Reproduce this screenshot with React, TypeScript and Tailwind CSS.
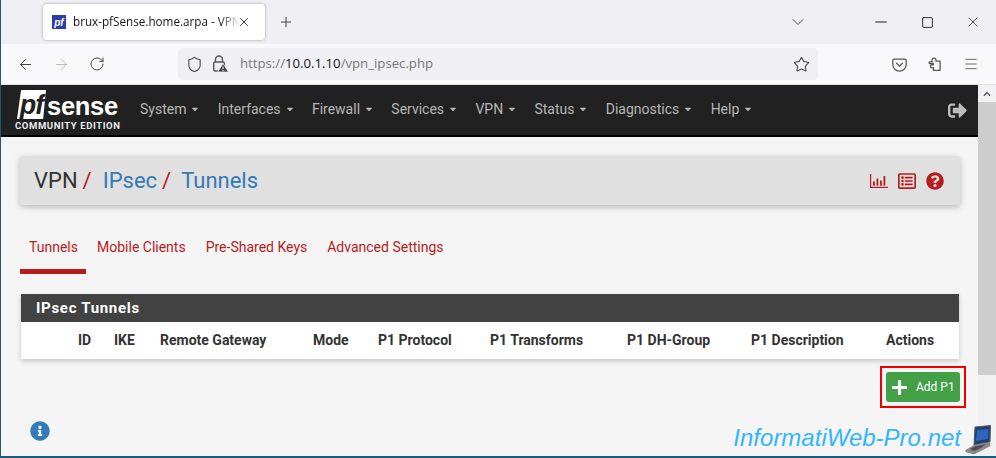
import { ArrowLeft, ArrowRight, ChevronDown, Menu, Minus, Plus, RotateCw, Shield, Square, Star, X } from 'lucide-react';
import { FaCaretDown, FaChevronUp, FaInfoCircle, FaPlus, FaQuestionCircle, FaRegListAlt, FaSignOutAlt } from 'react-icons/fa';

const navItems = ['System', 'Interfaces', 'Firewall', 'Services', 'VPN', 'Status', 'Diagnostics', 'Help'];

const columns = [
  { label: 'ID', width: 'w-[36px]' },
  { label: 'IKE', width: 'w-[46px]' },
  { label: 'Remote Gateway', width: 'w-[153px]' },
  { label: 'Mode', width: 'w-[65px]' },
  { label: 'P1 Protocol', width: 'w-[112px]' },
  { label: 'P1 Transforms', width: 'w-[137px]' },
  { label: 'P1 DH-Group', width: 'w-[124px]' },
  { label: 'P1 Description', width: 'w-[135px]' },
  { label: 'Actions', width: 'w-[70px]' },
];

function LockWarning() {
  return (
    <svg width="18" height="18" viewBox="0 0 18 18" fill="none">
      <path d="M4.5 7V4.5a3.5 3.5 0 0 1 7 0V7" stroke="#555" strokeWidth="1.4" />
      <rect x="2.7" y="7" width="10.6" height="9" rx="1.5" stroke="#555" strokeWidth="1.4" fill="#f0f0f4" />
      <path d="M12 8.5 L17.6 17 H6.6 Z" fill="#444" stroke="#f0f0f4" strokeWidth="0.8" />
      <path d="M12 11.5v2.6M12 15v1" stroke="#fff" strokeWidth="1" />
    </svg>
  );
}

function PocketIcon() {
  return (
    <svg width="15" height="15" viewBox="0 0 18 18" fill="none" stroke="#555" strokeWidth="1.5">
      <path d="M2.5 2.5h13A1.5 1.5 0 0 1 17 4v5a8 8 0 0 1-16 0V4a1.5 1.5 0 0 1 1.5-1.5Z" />
      <path d="M5.5 7.5 9 11l3.5-3.5" strokeLinecap="round" />
    </svg>
  );
}

function ExtensionIcon() {
  return (
    <svg width="15" height="16" viewBox="0 0 18 18" fill="none" stroke="#555" strokeWidth="1.5" strokeLinejoin="round">
      <path d="M1.5 6.5h3.5c-.8-2.6.2-4.5 2.2-4.5 2 0 2.9 1.7 2.2 3.5h5.1v11H6.5v-3.2c-1.8.6-3.6.1-3.6-1.7 0-1.6 1.8-2.2 3.6-1.6V8.5h-5Z" />
    </svg>
  );
}

function BarChartIcon() {
  return (
    <svg width="18" height="14" viewBox="0 0 18 14" fill="#b71c1c">
      <rect x="0" y="0" width="1.2" height="14" />
      <rect x="0" y="12.8" width="18" height="1.2" />
      <rect x="3" y="7.5" width="1.8" height="4.2" />
      <rect x="6.5" y="4.5" width="1.8" height="7.2" />
      <rect x="10" y="6.5" width="1.8" height="5.2" />
      <rect x="13.5" y="2" width="1.8" height="9.7" />
    </svg>
  );
}

function LaptopIcon() {
  return (
    <svg width="26" height="30" viewBox="0 0 26 30">
      <path d="M10 2 L25.5 0.5 L25 17 L9 20 Z" fill="#1d3f78" stroke="#5a5a5a" />
      <path d="M12 5 L23.5 4 L23 14 L11 16 Z" fill="#2f66b8" />
      <path d="M0.5 25 L9 20 L25 17 L25.5 21 L9 29.5 L0.5 27 Z" fill="#8a8a8a" />
      <path d="M5 24 L10 21.5 L21 19 L16 23 L9 26 Z" fill="#4d4d4d" />
    </svg>
  );
}

function BrowserChrome() {
  return (
    <div className="font-['Open_Sans',sans-serif] text-[#15141a]">
      {/* Tab strip */}
      <div className="flex h-[44px] items-center bg-[#f0f0f4] pl-[42px]">
        <div className="flex h-[36px] w-[222px] items-center rounded-[4px] bg-white pl-[9px] shadow-[0_0_3px_rgba(0,0,0,0.35)]">
          <span className="flex h-[14px] w-[14px] items-center justify-center bg-[#2a3fa8] font-['Liberation_Sans',sans-serif] text-[10px] font-bold italic text-white">pf</span>
          <span className="ml-[7px] w-[167px] whitespace-nowrap text-[11.7px] [mask-image:linear-gradient(to_right,black_88%,transparent)]">brux-pfSense.home.arpa - VPN:</span>
          <X size={14} strokeWidth={1.5} className="ml-[-3px]" />
        </div>
        <Plus size={16} strokeWidth={1.5} className="ml-[13px] text-[#444]" />
        <div className="ml-auto flex items-center">
          <ChevronDown size={20} strokeWidth={1.1} className="mr-[50px] text-[#444]" />
          <div className="flex w-[46px] justify-center"><Minus size={18} strokeWidth={1.2} className="text-black" /></div>
          <div className="flex w-[46px] justify-center"><Square size={13} strokeWidth={1.5} className="text-black" /></div>
          <div className="flex w-[46px] justify-center"><X size={16} strokeWidth={1} className="text-black" /></div>
        </div>
      </div>
      {/* Address bar */}
      <div className="flex h-[41px] items-center border-b border-[#e2e2e6] bg-[#f9f9fb]">
        <ArrowLeft size={17} strokeWidth={1.4} className="ml-[16px] text-[#444]" />
        <ArrowRight size={17} strokeWidth={1.4} className="ml-[19px] text-[#bbb]" />
        <RotateCw size={16} strokeWidth={1.5} className="ml-[19px] text-[#444]" />
        <div className="ml-[73px] flex h-[32px] w-[640px] items-center rounded-[4px] bg-[#f0f0f4] pl-[8px]">
          <Shield size={17} strokeWidth={1.5} className="text-[#444]" />
          <span className="ml-[8px]"><LockWarning /></span>
          <span className="ml-[11px] text-[13.2px] text-[#77767c]">
            https://<span className="text-[#15141a]">10.0.1.10</span>/vpn_ipsec.php
          </span>
          <Star size={17} strokeWidth={1.5} className="ml-auto mr-[8px] text-[#444]" />
        </div>
        <div className="ml-[63px] flex items-center text-[#555]">
          <div className="flex w-[36px] justify-center"><PocketIcon /></div>
          <div className="flex w-[36px] justify-center"><ExtensionIcon /></div>
          <div className="flex w-[36px] justify-center"><Menu size={16} strokeWidth={1.3} /></div>
        </div>
      </div>
    </div>
  );
}

function Logo() {
  return (
    <div className="flex w-[106px] flex-col items-start">
      <div className="flex h-[30px] items-end">
        <span className="ml-[2px] flex h-[29px] w-[29px] items-end justify-center bg-white font-['Liberation_Sans',sans-serif] text-[27px] font-bold italic leading-[27px] tracking-[-1px] text-[#212121] [clip-path:polygon(14%_0,100%_0,90%_100%,0_100%)]">pf</span>
        <span className="ml-[1px] font-['Liberation_Sans',sans-serif] text-[25.5px] font-bold leading-[26px] tracking-[-0.3px] text-white">sense</span>
      </div>
      <span className="mt-[2px] whitespace-nowrap font-['Roboto',sans-serif] text-[9.5px] font-bold leading-[10px] tracking-[0.6px] text-[#e8eef2]">COMMUNITY EDITION</span>
    </div>
  );
}

function Navbar() {
  return (
    <div className="flex h-[52px] items-center border-b-2 border-black bg-[#212121] pl-[14px] pr-[11px]">
      <Logo />
      <div className="mb-[2px] ml-[19px] flex items-center gap-[17.3px] text-[14px] text-[#b6b6b6]">
        {navItems.map((item) => (
          <span key={item} className="flex items-center gap-[4px]">
            {item}
            <FaCaretDown size={10} />
          </span>
        ))}
      </div>
      <FaSignOutAlt size={19} className="ml-auto text-[#bdbdbd]" />
    </div>
  );
}

function Scrollbar() {
  return (
    <div className="flex h-full w-[18px] shrink-0 flex-col bg-[#f1f1f1]">
      <div className="flex h-[17px] items-center justify-center">
        <FaChevronUp size={8} className="text-[#505050]" />
      </div>
      <div className="h-[273px] bg-[#cdcdcd]" />
    </div>
  );
}

export default function App() {
  return (
    <div className="relative h-[458px] w-[996px] overflow-hidden border-b-2 border-l border-[#1c5a7e] bg-[#f5f5f5] font-['Roboto',sans-serif]">
      <BrowserChrome />
      <div className="flex h-[373px]">
        <div className="min-w-0 flex-1">
          <Navbar />
          <div className="pl-[19px] pr-[18px] pt-[19px]">
            {/* Page title */}
            <div className="flex h-[49px] items-center rounded-[3px] bg-[#e0e0e0] pl-[14px] pr-[16px] text-[22px] shadow-[0_2px_6px_rgba(0,0,0,0.25)]">
              <span className="text-[#333]">VPN</span>
              <span className="ml-[5px] text-[#b71c1c]">/</span>
              <span className="ml-[11px] text-[#337ab7]">IPsec</span>
              <span className="ml-[5px] text-[#b71c1c]">/</span>
              <span className="ml-[10px] text-[#337ab7]">Tunnels</span>
              <div className="ml-auto flex items-center gap-[10px] text-[#b71c1c]">
                <BarChartIcon />
                <FaRegListAlt size={18} />
                <FaQuestionCircle size={18} />
              </div>
            </div>
            {/* Tabs */}
            <div className="mt-[30px] flex h-[39px] text-[14px] text-[#b71c1c]">
              <div className="h-[39px] w-[66px] border-b-[5px] border-[#b71c1c] pl-[9px] pt-[2px]">Tunnels</div>
              <div className="ml-[11px] pt-[2px]">Mobile Clients</div>
              <div className="ml-[20px] pt-[2px]">Pre-Shared Keys</div>
              <div className="ml-[20px] pt-[2px]">Advanced Settings</div>
            </div>
            {/* Tunnels panel */}
            <div className="mx-[1px] mt-[20px] bg-white shadow-[0_2px_5px_rgba(0,0,0,0.2)]">
              <div className="flex h-[28px] items-center bg-[#424242] pl-[15px] text-[15px] font-bold tracking-[0.7px] text-white">IPsec Tunnels</div>
              <div className="flex h-[37px] items-center whitespace-nowrap pl-[57px] text-[14px] font-bold text-[#333]">
                {columns.map((col) => (
                  <div key={col.label} className={col.width}>{col.label}</div>
                ))}
              </div>
            </div>
            <div className="-mr-[6px] mt-[7px] flex justify-end">
              <div className="border-2 border-[#f00000] p-[4px]">
                <div className="flex h-[30px] w-[74px] items-center rounded-[3px] bg-[#43a047] pl-[5px] text-[12px] text-white">
                  <FaPlus size={17} />
                  <span className="ml-[8px]">Add P1</span>
                </div>
              </div>
            </div>
            <FaInfoCircle size={20} className="ml-[10px] mt-[13px] text-[#337ab7]" />
          </div>
        </div>
        <Scrollbar />
      </div>
      {/* Watermark */}
      <div className="absolute bottom-[1px] right-[5px] flex items-end">
        <span className="mb-[3px] mr-[4px] font-['Liberation_Sans',sans-serif] text-[24px] italic leading-[28px] text-[#33b5ff]">InformatiWeb-Pro.net</span>
        <LaptopIcon />
      </div>
    </div>
  );
}
